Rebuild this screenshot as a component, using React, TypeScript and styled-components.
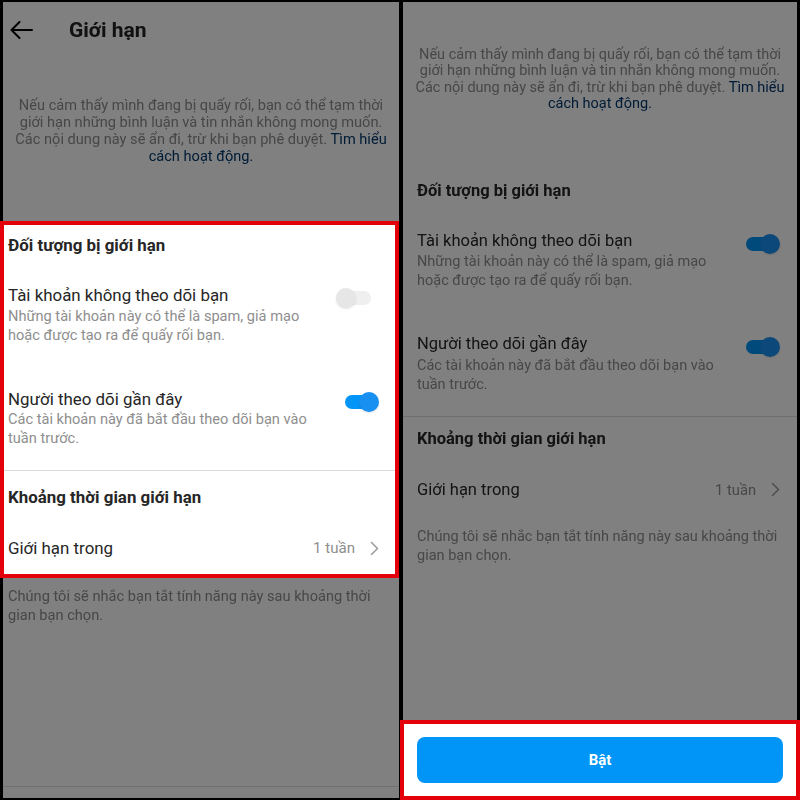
import styled, { createGlobalStyle } from "styled-components";

const GlobalStyle = createGlobalStyle`
  html, body {
    margin: 0;
    padding: 0;
    background: #000;
  }
  body {
    font-family: Roboto, "Noto Sans", "DejaVu Sans", sans-serif;
  }
`;

const Page = styled.div`
  width: 800px;
  height: 800px;
  box-sizing: border-box;
  padding: 2px 3px;
  display: flex;
  gap: 4px;
  background: #000;
  overflow: hidden;
`;

const Panel = styled.div<{ $w: number; $pl: number; $body: number; $small: number }>`
  flex: none;
  width: ${(p) => p.$w}px;
  height: 100%;
  display: flex;
  flex-direction: column;
  background: #808080;
  --pl: ${(p) => p.$pl}px;
  --pr: 17px;
  --fs-body: ${(p) => p.$body}px;
  --fs-small: ${(p) => p.$small}px;
`;

const Dim = styled.div<{ $grow?: boolean }>`
  display: flex;
  flex-direction: column;
  filter: brightness(0.5);
  ${(p) => (p.$grow ? "flex: 1;" : "")}
`;

const Highlight = styled.section`
  background: #fff;
  border: 4px solid #e3000b;
  margin-left: -3px;
  --pl: 4px;
  --pr: 16px;
`;

const Header = styled.header`
  height: 56px;
  display: flex;
  align-items: center;
  gap: 36px;
  padding-left: 7px;
`;

const Title = styled.h1`
  margin: 0;
  font-size: 21px;
  font-weight: 700;
  color: #222;
`;

const Intro = styled.p<{ $top: number; $bottom: number; $lh: number }>`
  margin: 0;
  padding: ${(p) => p.$top}px 4px ${(p) => p.$bottom}px;
  text-align: center;
  font-size: var(--fs-small);
  line-height: ${(p) => p.$lh}px;
  color: #8e8e8e;
  white-space: nowrap;
`;

const Link = styled.span`
  color: #00376b;
`;

const SectionTitle = styled.h2<{ $top: number; $bottom: number }>`
  margin: 0;
  padding: ${(p) => p.$top}px var(--pr) ${(p) => p.$bottom}px var(--pl);
  font-size: var(--fs-body);
  line-height: 20px;
  font-weight: 700;
  color: #262626;
`;

const SwitchRow = styled.div<{ $pad: number }>`
  display: flex;
  align-items: flex-start;
  padding: ${(p) => p.$pad}px var(--pr) ${(p) => p.$pad}px var(--pl);
`;

const RowText = styled.div`
  flex: 1;
`;

const RowTitle = styled.div<{ $grow?: boolean }>`
  font-size: var(--fs-body);
  line-height: 20px;
  color: #262626;
  ${(p) => (p.$grow ? "flex: 1;" : "")}
`;

const RowDesc = styled.div`
  margin-top: 1.5px;
  font-size: var(--fs-small);
  line-height: 19px;
  color: #8e8e8e;
  white-space: nowrap;
`;

const Switch = styled.span<{ $on: boolean }>`
  position: relative;
  flex: none;
  width: 38px;
  height: 20px;
  margin-top: 3px;
  &::before {
    content: "";
    position: absolute;
    left: 4px;
    right: ${(p) => (p.$on ? "4px" : "8px")};
    top: 3px;
    height: 14px;
    border-radius: 7px;
    background: ${(p) => (p.$on ? "#0095f6" : "#efefef")};
  }
  &::after {
    content: "";
    position: absolute;
    top: 0;
    ${(p) => (p.$on ? "right: 0;" : "left: -5px;")}
    width: 20px;
    height: 20px;
    border-radius: 50%;
    background: ${(p) => (p.$on ? "#1890f2" : "#e6e6e6")};
    box-shadow: 0 1px 2px rgba(0, 0, 0, 0.12);
  }
`;

const Divider = styled.hr`
  margin: 0;
  border: 0;
  border-top: 1px solid #dbdbdb;
`;

const NavRow = styled.div`
  display: flex;
  align-items: center;
  padding: 16px var(--pr) 16px var(--pl);
`;

const NavValue = styled.span`
  margin-right: 15px;
  font-size: calc(var(--fs-body) - 1.8px);
  line-height: 20px;
  color: #8e8e8e;
`;

const FooterNote = styled.p<{ $top: number }>`
  margin: 0;
  padding: ${(p) => p.$top}px var(--pr) 0 var(--pl);
  font-size: var(--fs-small);
  line-height: 19px;
  color: #8e8e8e;
  white-space: nowrap;
`;

const NavLine = styled.div`
  margin-top: auto;
  height: 11px;
  border-top: 1px solid #dedede;
`;

const ActionBar = styled.div`
  margin: 0 -3px -2px;
  padding: 13px;
  background: #fff;
  border: 4px solid #e3000b;
`;

const PrimaryButton = styled.button`
  display: block;
  width: 100%;
  height: 46px;
  border: 0;
  border-radius: 8px;
  background: #0095f6;
  color: #fff;
  font-family: Roboto, "Noto Sans", sans-serif;
  font-size: 15px;
  font-weight: 700;
`;

const BackArrow = () => (
  <svg width="23" height="18" viewBox="0 0 23 18" fill="none">
    <path d="M22 9H1.5M9.5 1L1.5 9l8 8" stroke="#000" strokeWidth="2" strokeLinecap="round" strokeLinejoin="round" />
  </svg>
);

const Chevron = () => (
  <svg width="9" height="15" viewBox="0 0 9 15" fill="none">
    <path d="M1.5 1.5l6 6-6 6" stroke="#9a9a9a" strokeWidth="1.5" strokeLinecap="round" strokeLinejoin="round" />
  </svg>
);

const IntroText = () => (
  <>
    Nếu cảm thấy mình đang bị quấy rối, bạn có thể tạm thời
    <br />
    giới hạn những bình luận và tin nhắn không mong muốn.
    <br />
    Các nội dung này sẽ ẩn đi, trừ khi bạn phê duyệt. <Link>Tìm hiểu</Link>
    <br />
    <Link>cách hoạt động.</Link>
  </>
);

type SettingsProps = { firstOn: boolean; rowPad: number; secTop: number };

const RestrictSettings = ({ firstOn, rowPad, secTop }: SettingsProps) => (
  <>
    <SectionTitle $top={10} $bottom={8}>
      Đối tượng bị giới hạn
    </SectionTitle>
    <SwitchRow $pad={rowPad}>
      <RowText>
        <RowTitle>Tài khoản không theo dõi bạn</RowTitle>
        <RowDesc>
          Những tài khoản này có thể là spam, giả mạo
          <br />
          hoặc được tạo ra để quấy rối bạn.
        </RowDesc>
      </RowText>
      <Switch $on={firstOn} />
    </SwitchRow>
    <SwitchRow $pad={rowPad}>
      <RowText>
        <RowTitle>Người theo dõi gần đây</RowTitle>
        <RowDesc>
          Các tài khoản này đã bắt đầu theo dõi bạn vào
          <br />
          tuần trước.
        </RowDesc>
      </RowText>
      <Switch $on />
    </SwitchRow>
    <Divider />
    <SectionTitle $top={secTop} $bottom={15}>
      Khoảng thời gian giới hạn
    </SectionTitle>
    <NavRow>
      <RowTitle $grow>Giới hạn trong</RowTitle>
      <NavValue>1 tuần</NavValue>
      <Chevron />
    </NavRow>
  </>
);

const Footer = ({ top }: { top: number }) => (
  <FooterNote $top={top}>
    Chúng tôi sẽ nhắc bạn tắt tính năng này sau khoảng thời
    <br />
    gian bạn chọn.
  </FooterNote>
);

export default function App() {
  return (
    <>
      <GlobalStyle />
      <Page>
        <Panel $w={396} $pl={5} $body={16.9} $small={14.6}>
          <Dim>
            <Header>
              <BackArrow />
              <Title>Giới hạn</Title>
            </Header>
            <Intro $top={38.5} $bottom={56.5} $lh={17}>
              <IntroText />
            </Intro>
          </Dim>
          <Highlight>
            <RestrictSettings firstOn={false} rowPad={22} secTop={16} />
          </Highlight>
          <Dim $grow>
            <Footer top={9} />
            <NavLine />
          </Dim>
        </Panel>
        <Panel $w={394} $pl={14} $body={16.5} $small={14.5}>
          <Dim $grow>
            <Intro $top={44.75} $bottom={58} $lh={16.5}>
              <IntroText />
            </Intro>
            <RestrictSettings firstOn rowPad={22} secTop={12} />
            <Footer top={11} />
          </Dim>
          <ActionBar>
            <PrimaryButton>Bật</PrimaryButton>
          </ActionBar>
        </Panel>
      </Page>
    </>
  );
}
